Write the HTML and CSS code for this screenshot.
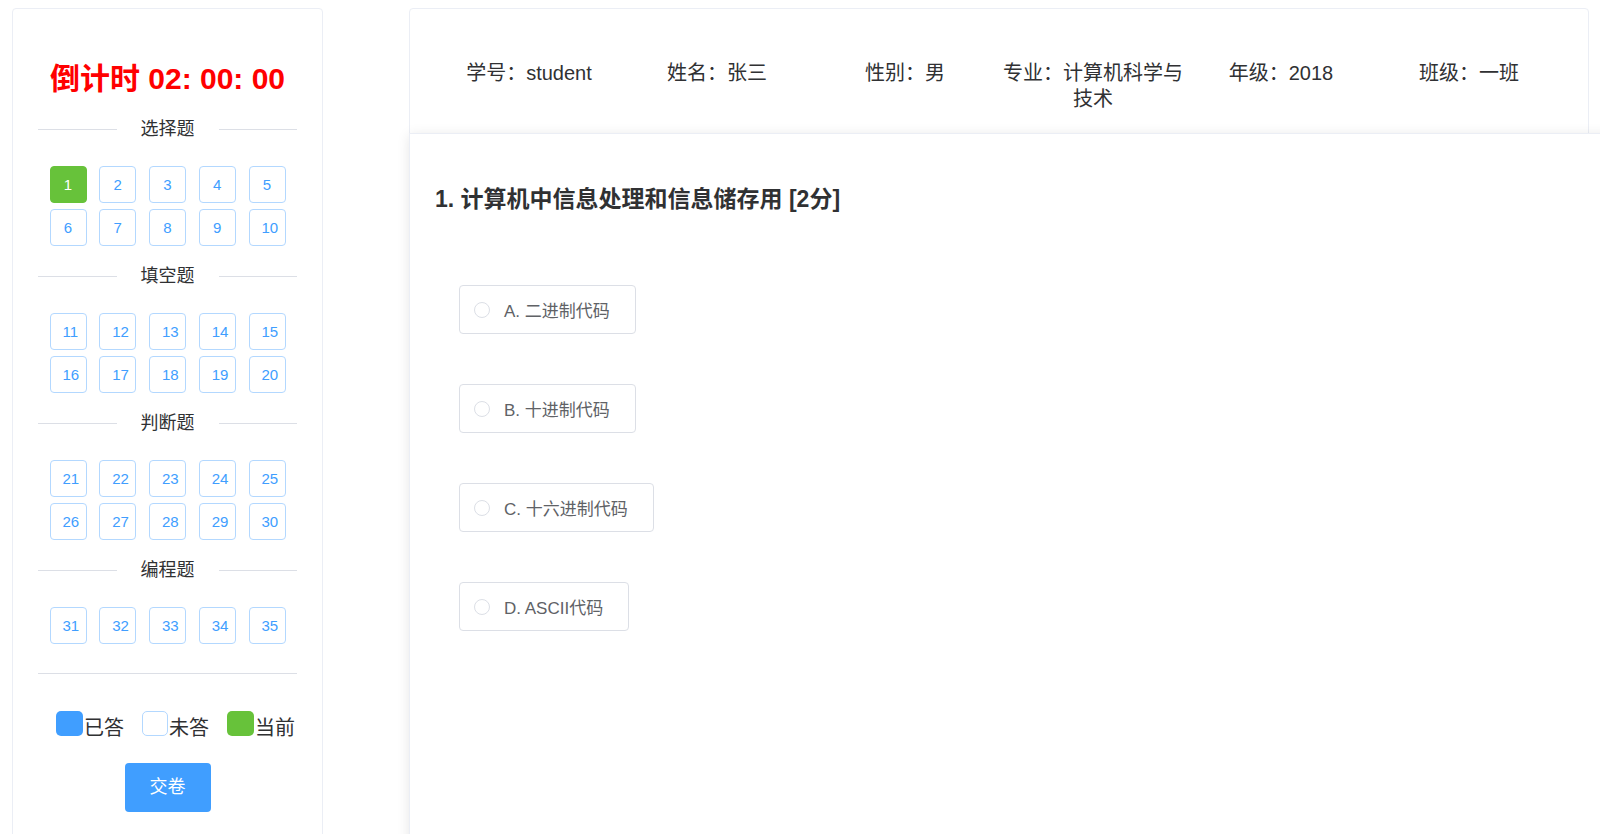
FILE: index.html
```html
<!DOCTYPE html>
<html lang="zh">
<head>
<meta charset="utf-8">
<title>考试</title>
<link rel="stylesheet" href="styles.css">
</head>
<body>
<div class="page">
  <aside class="side-card">
    <div class="timer">倒计时 02: 00: 00</div>

    <div class="divider"><span class="divider-line"></span><span class="divider-text">选择题</span><span class="divider-line"></span></div>
    <div class="num-grid">
      <div class="num num-current">1</div><div class="num">2</div><div class="num">3</div><div class="num">4</div><div class="num">5</div>
      <div class="num">6</div><div class="num">7</div><div class="num">8</div><div class="num">9</div><div class="num">10</div>
    </div>

    <div class="divider"><span class="divider-line"></span><span class="divider-text">填空题</span><span class="divider-line"></span></div>
    <div class="num-grid">
      <div class="num">11</div><div class="num">12</div><div class="num">13</div><div class="num">14</div><div class="num">15</div>
      <div class="num">16</div><div class="num">17</div><div class="num">18</div><div class="num">19</div><div class="num">20</div>
    </div>

    <div class="divider"><span class="divider-line"></span><span class="divider-text">判断题</span><span class="divider-line"></span></div>
    <div class="num-grid">
      <div class="num">21</div><div class="num">22</div><div class="num">23</div><div class="num">24</div><div class="num">25</div>
      <div class="num">26</div><div class="num">27</div><div class="num">28</div><div class="num">29</div><div class="num">30</div>
    </div>

    <div class="divider"><span class="divider-line"></span><span class="divider-text">编程题</span><span class="divider-line"></span></div>
    <div class="num-grid">
      <div class="num">31</div><div class="num">32</div><div class="num">33</div><div class="num">34</div><div class="num">35</div>
    </div>

    <div class="plain-line"></div>

    <div class="legend">
      <div class="legend-item"><span class="swatch swatch-done"></span><span class="legend-text">已答</span></div>
      <div class="legend-item"><span class="swatch swatch-todo"></span><span class="legend-text">未答</span></div>
      <div class="legend-item"><span class="swatch swatch-current"></span><span class="legend-text">当前</span></div>
    </div>

    <div class="submit">交卷</div>
  </aside>

  <main class="content">
    <header class="info-card">
      <div class="info-col">学号：student</div>
      <div class="info-col">姓名：张三</div>
      <div class="info-col">性别：男</div>
      <div class="info-col">专业：计算机科学与技术</div>
      <div class="info-col">年级：2018</div>
      <div class="info-col">班级：一班</div>
    </header>

    <section class="question-card">
      <h2 class="q-title">1. 计算机中信息处理和信息储存用 [2分]</h2>
      <div class="options">
        <label class="option"><span class="radio"></span><span class="option-text">A. 二进制代码</span></label>
        <label class="option"><span class="radio"></span><span class="option-text">B. 十进制代码</span></label>
        <label class="option"><span class="radio"></span><span class="option-text">C. 十六进制代码</span></label>
        <label class="option"><span class="radio"></span><span class="option-text">D. ASCII代码</span></label>
      </div>
    </section>
  </main>
</div>
</body>
</html>
```

FILE: styles.css
```css
html, body {
  margin: 0;
  padding: 0;
  overflow: hidden;
  background: #fff;
  font-family: "Liberation Sans", "Noto Sans CJK SC", sans-serif;
  color: #303133;
}

.page {
  display: flex;
  align-items: flex-start;
  padding: 8px 0 0 12px;
  gap: 86px;
}

/* ---------- left panel ---------- */
.side-card {
  flex: 0 0 311px;
  box-sizing: border-box;
  width: 311px;
  height: 880px;
  border: 1px solid #ebeef5;
  border-radius: 4px;
  padding: 0 25px;
  background: #fff;
}

.timer {
  margin-top: 50px;
  line-height: 40px;
  height: 40px;
  text-align: center;
  font-size: 30px;
  font-weight: bold;
  color: #ff0000;
  white-space: nowrap;
}

.divider {
  display: flex;
  align-items: center;
  height: 24px;
  margin-top: 18px;
}

.divider-line {
  flex: 1;
  height: 1px;
  background: #dcdfe6;
}

.divider-text {
  padding: 0 24px;
  font-size: 18px;
  line-height: 24px;
  color: #303133;
}

.num-grid {
  display: grid;
  grid-template-columns: repeat(5, 37px);
  grid-auto-rows: 37px;
  column-gap: 12.75px;
  row-gap: 6px;
  justify-content: center;
  margin-top: 25px;
}

.num {
  box-sizing: border-box;
  width: 37px;
  height: 37px;
  padding: 0 12px;
  border: 1px solid #b3d8ff;
  border-radius: 4px;
  background: #fff;
  color: #409eff;
  font-size: 15px;
  line-height: 35px;
  text-align: center;
  white-space: nowrap;
}

.num-current {
  background: #67c23a;
  border-color: #67c23a;
  color: #fff;
}

.plain-line {
  height: 1px;
  background: #dcdfe6;
  margin-top: 29px;
}

.legend {
  display: flex;
  align-items: flex-end;
  gap: 18px;
  margin: 37px 0 0 18px;
}

.legend-item {
  display: flex;
  align-items: flex-end;
}

.swatch {
  box-sizing: border-box;
  width: 27px;
  height: 25px;
  border-radius: 5px;
  margin-right: 1px;
}

.swatch-done { background: #409eff; }
.swatch-todo { background: #fff; border: 1px solid #b3d8ff; width: 26px; }
.swatch-current { background: #67c23a; }

.legend-text {
  font-size: 20px;
  line-height: 20px;
  color: #303133;
  position: relative;
  top: 2px;
}

.submit {
  width: 86px;
  height: 49px;
  margin: 27px auto 0;
  border-radius: 4px;
  background: #409eff;
  color: #fff;
  font-size: 18px;
  line-height: 49px;
  text-align: center;
}

/* ---------- right content ---------- */
.content {
  flex: 0 0 1180px;
  width: 1180px;
}

.info-card {
  box-sizing: border-box;
  height: 126px;
  display: grid;
  grid-template-columns: repeat(6, 1fr);
  align-items: start;
  padding: 51px 25px 0;
  border: 1px solid #ebeef5;
  border-radius: 4px 4px 0 0;
  background: #fff;
}

.info-col {
  text-align: center;
  font-size: 20px;
  line-height: 26px;
  color: #303133;
}

.question-card {
  box-sizing: border-box;
  width: 1240px;
  height: 760px;
  margin-top: -1px;
  border: 1px solid #ebeef5;
  background: #fff;
  box-shadow: 0 2px 12px 0 rgba(0, 0, 0, 0.1);
  padding: 50px 0 0 25px;
}

.q-title {
  margin: 0;
  font-size: 23px;
  line-height: 30px;
  font-weight: bold;
  color: #303133;
}

.options {
  display: flex;
  flex-direction: column;
  align-items: flex-start;
  gap: 50px;
  margin: 71px 0 0 24px;
}

.option {
  box-sizing: border-box;
  display: flex;
  align-items: center;
  height: 49px;
  padding: 0 25px 0 14px;
  border: 1px solid #dcdfe6;
  border-radius: 4px;
  background: #fff;
}

.radio {
  box-sizing: border-box;
  width: 16px;
  height: 16px;
  border: 1px solid #dcdfe6;
  border-radius: 50%;
  margin-right: 14px;
  background: #fff;
}

.option-text {
  font-size: 17px;
  color: #606266;
  white-space: nowrap;
}
```
